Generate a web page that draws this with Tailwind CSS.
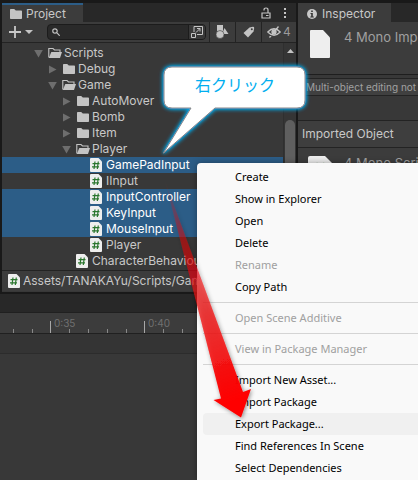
<!DOCTYPE html>
<html lang="ja">
<head>
<meta charset="utf-8">
<meta name="viewport" content="width=device-width, initial-scale=1">
<title>Project</title>
<script src="https://cdn.jsdelivr.net/npm/@tailwindcss/browser@4"></script>
</head>
<body class="bg-[#191919]">
<svg class="hidden" aria-hidden="true">
  <symbol id="folder" viewBox="0 0 14 12"><path d="M1 1.8q0-.8.8-.8h3.4l1.6 1.5h5.4q.8 0 .8.8v6.900q0 .8-.8.8H1.800q-.8 0-.8-.8z" fill="#c4c4c4"/></symbol>
  <symbol id="folder-open" viewBox="0 0 14 12"><path d="M.8 10.500V1.500h4.200L6.500 3H12v2" fill="none" stroke="#c4c4c4" stroke-width="1.100"/><path d="M3.300 5H14l-2 6H.800z" fill="#c4c4c4"/></symbol>
  <symbol id="script" viewBox="0 0 12 14"><path d="M1 0h7.500L12 3.500V13q0 1-1 1H1q-1 0-1-1V1q0-1 1-1z" fill="#eee"/><path d="M5 3.500 4 11M8.300 3.500l-1 7.500M2.500 5.700h7M2 8.800h7" fill="none" stroke="#2a762e" stroke-width="1.200"/></symbol>
  <symbol id="right" viewBox="0 0 9 9"><path d="M1 .5v8l7.500-4z" fill="#6e6e6e"/></symbol>
  <symbol id="down" viewBox="0 0 9 9"><path d="M.2 1h8.600L4.500 8.500z" fill="#6e6e6e"/></symbol>
</svg>

<div class="relative h-screen overflow-hidden bg-[#191919] pt-[3px] font-['Inter',sans-serif] text-[12px] text-[#c8c8c8]">
  <div class="flex gap-[2px] pl-[2px]">

    <!-- Project window -->
    <section class="w-[294px] shrink-0 bg-[#383838]">
      <header class="flex h-[19px] items-stretch bg-[#282828]">
        <h2 class="flex w-[81px] items-center gap-[3px] border-t-2 border-[#2c5d87] bg-[#3c3c3c] pl-[7px] leading-4">
          <svg class="h-3 w-[14px]"><use href="#folder"/></svg>Project
        </h2>
        <div class="ml-auto flex items-center gap-3 pr-[9px]">
          <button type="button" aria-label="Lock"><svg class="h-3 w-[10px]" viewBox="0 0 10 12" fill="none" stroke="#c4c4c4" stroke-width="1.200"><path d="M1 6h8v5H1zM3 3.500V3q0-2 2-2t2 2v3M5 8.500h2.500"/></svg></button>
          <button type="button" aria-label="Window menu"><svg class="h-3 w-1" viewBox="0 0 4 12" fill="#c4c4c4"><path d="M1 1h2v2H1zM1 5h2v2H1zM1 9h2v2H1z"/></svg></button>
        </div>
      </header>

      <div class="flex h-[21px] items-center border-b border-[#232323] bg-[#3c3c3c]">
        <button type="button" aria-label="Create asset" class="flex w-[45px] shrink-0 items-center gap-1 pl-[7px]">
          <svg class="size-3" viewBox="0 0 12 12" stroke="#c8c8c8" stroke-width="1.800"><path d="M6 0v12M0 6h12"/></svg>
          <svg class="h-1 w-2" viewBox="0 0 8 4"><path d="M0 0h8L4 4z" fill="#c4c4c4"/></svg>
        </button>
        <div class="flex h-4 min-w-0 flex-1 items-center overflow-hidden rounded-[4px] border border-[#1c1c1c] bg-[#2a2a2a] pl-1">
          <svg class="h-2 w-2 shrink-0" viewBox="0 0 8 8" fill="none" stroke="#c4c4c4" stroke-width="1.200"><circle cx="3" cy="3" r="2.200"/><path d="m4.700 4.700 3 3"/></svg>
          <input type="text" aria-label="Search assets" class="h-3 min-w-0 flex-1 bg-transparent outline-none">
          <button type="button" aria-label="Open search" class="flex h-full shrink-0 items-center border-l border-[#1c1c1c] bg-[#383838] px-[2px]"><svg class="size-3" viewBox="0 0 12 12" fill="none" stroke="#c4c4c4" stroke-width="1"><path d="M3 6V.5h8.500v8H6M.5 7.500h4v4h-4zM5 6.500l4-4M6 2.500h3v3"/></svg></button>
        </div>
        <button type="button" aria-label="Filter by type" class="ml-[3px] flex h-full w-[26px] shrink-0 items-center justify-center border-l border-[#232323]"><svg class="h-[14px] w-[13px]" viewBox="0 0 13 14" fill="#c4c4c4"><path d="M1 0h6v6H1zM8.500 3l4 6H6z"/><circle cx="4" cy="9.500" r="4" stroke="#3c3c3c" stroke-width=".6"/></svg></button>
        <button type="button" aria-label="Filter by label" class="flex h-full w-[26px] shrink-0 items-center justify-center border-l border-[#232323]"><svg class="size-3" viewBox="0 0 12 12"><path d="M6.500 1.500 10 .800q1.200 0 1.200 1.200L10.500 5.500 5 11.500.500 7z" fill="#c4c4c4"/><circle cx="8.800" cy="3.200" r="1" fill="#3c3c3c"/></svg></button>
        <button type="button" aria-label="Hidden packages: 4" class="flex h-full w-[35px] shrink-0 items-center gap-[2px] border-l border-[#232323] pl-[5px]"><svg class="h-3 w-[14px]" viewBox="0 0 14 12" fill="none" stroke="#c4c4c4" stroke-width="1.300"><path d="M.8 6Q7-.5 13.200 6 7 12.500.800 6zM11.500.500l-9 11"/><circle cx="7" cy="6" r="2" fill="#c4c4c4"/></svg><span class="text-[#9a9a9a]">4</span></button>
      </div>

      <div class="flex">
        <ul role="tree" aria-label="Assets" class="min-w-0 flex-1 overflow-hidden pt-[2px] pb-px leading-4 whitespace-nowrap">
          <li role="treeitem" class="flex h-4 items-center pl-[32px]"><svg class="mr-[5px] size-[9px]"><use href="#down"/></svg><svg class="mr-[2px] h-3 w-[14px]"><use href="#folder-open"/></svg>Scripts</li>
          <li role="treeitem" class="flex h-4 items-center pl-[46px]"><svg class="mr-[5px] size-[9px]"><use href="#right"/></svg><svg class="mr-[2px] h-3 w-[14px]"><use href="#folder"/></svg>Debug</li>
          <li role="treeitem" class="flex h-4 items-center pl-[46px]"><svg class="mr-[5px] size-[9px]"><use href="#down"/></svg><svg class="mr-[2px] h-3 w-[14px]"><use href="#folder-open"/></svg>Game</li>
          <li role="treeitem" class="flex h-4 items-center pl-[60px]"><svg class="mr-[5px] size-[9px]"><use href="#right"/></svg><svg class="mr-[2px] h-3 w-[14px]"><use href="#folder"/></svg>AutoMover</li>
          <li role="treeitem" class="flex h-4 items-center pl-[60px]"><svg class="mr-[5px] size-[9px]"><use href="#right"/></svg><svg class="mr-[2px] h-3 w-[14px]"><use href="#folder"/></svg>Bomb</li>
          <li role="treeitem" class="flex h-4 items-center pl-[60px]"><svg class="mr-[5px] size-[9px]"><use href="#right"/></svg><svg class="mr-[2px] h-3 w-[14px]"><use href="#folder"/></svg>Item</li>
          <li role="treeitem" class="flex h-4 items-center pl-[60px]"><svg class="mr-[5px] size-[9px]"><use href="#down"/></svg><svg class="mr-[2px] h-3 w-[14px]"><use href="#folder-open"/></svg>Player</li>
          <li role="treeitem" aria-selected="true" class="flex h-4 items-center gap-1 bg-[#2c5d87] pl-[88px] text-white"><svg class="h-[14px] w-3"><use href="#script"/></svg>GamePadInput</li>
          <li role="treeitem" class="flex h-4 items-center gap-1 pl-[88px]"><svg class="h-[14px] w-3"><use href="#script"/></svg>IInput</li>
          <li role="treeitem" aria-selected="true" class="flex h-4 items-center gap-1 bg-[#2c5d87] pl-[88px] text-white"><svg class="h-[14px] w-3"><use href="#script"/></svg>InputController</li>
          <li role="treeitem" aria-selected="true" class="flex h-4 items-center gap-1 bg-[#2c5d87] pl-[88px] text-white"><svg class="h-[14px] w-3"><use href="#script"/></svg>KeyInput</li>
          <li role="treeitem" aria-selected="true" class="flex h-4 items-center gap-1 bg-[#2c5d87] pl-[88px] text-white"><svg class="h-[14px] w-3"><use href="#script"/></svg>MouseInput</li>
          <li role="treeitem" class="flex h-4 items-center gap-1 pl-[88px]"><svg class="h-[14px] w-3"><use href="#script"/></svg>Player</li>
          <li role="treeitem" class="flex h-4 items-center gap-1 pl-[74px]"><svg class="h-[14px] w-3"><use href="#script"/></svg>CharacterBehaviour</li>
        </ul>
        <div class="flex w-[13px] flex-col items-center border-l border-[#2f2f2f] bg-[#353535] pt-[6px]">
          <svg class="mb-[67px] h-1 w-[7px]" viewBox="0 0 7 4"><path d="M0 4h7L3.500 0z" fill="#c4c4c4"/></svg>
          <div class="w-[10px] flex-1 rounded-full bg-[#5f5f5f]"></div>
        </div>
      </div>

      <footer class="flex h-[21px] items-center gap-[3px] overflow-hidden border-t border-[#232323] bg-[#3c3c3c] pl-[6px] whitespace-nowrap">
        <svg class="h-[14px] w-3 shrink-0"><use href="#script"/></svg>Assets/TANAKAYu/Scripts/Game
      </footer>
    </section>

    <!-- Inspector window -->
    <section class="min-w-0 flex-1 overflow-hidden bg-[#383838] whitespace-nowrap">
      <header class="flex h-[19px] bg-[#282828]">
        <h2 class="flex w-[93px] items-center gap-[5px] bg-[#3c3c3c] pt-[2px] pl-[9px] leading-4">
          <svg class="size-[10px]" viewBox="0 0 10 10"><circle cx="5" cy="5" r="5" fill="#c8c8c8"/><path d="M4.200 1.500h1.600v1.600H4.200zM3.500 4h2.300v3.500h1v1H3.300v-1h.900V5h-.7z" fill="#333"/></svg>Inspector
        </h2>
      </header>
      <div class="flex h-[53px] gap-[14px] border-b border-[#1e1e1e] bg-[#3c3c3c] pt-2 pl-3 text-[13px] leading-[14px] text-[#a0a0a0]">
        <svg class="h-7 w-5 shrink-0" viewBox="0 0 20 28"><path d="M1 0h12l7 7.500V27q0 1-1 1H1q-1 0-1-1V1q0-1 1-1z" fill="#eee"/></svg>4 Mono Importers
      </div>
      <div class="mt-[3px] h-[18px] border-y border-[#232323] bg-[#404040] pl-2 text-[10px] leading-4 text-[#a0a0a0]">Multi-object editing not supported.</div>
      <div class="mt-6 h-7 border-y border-[#232323] bg-[#3e3e3e] pl-1 leading-[26px]">Imported Object</div>
      <div class="flex h-[144px] gap-3 bg-[#3c3c3c] pt-2 pl-[10px] text-[13px] leading-[14px] text-[#a0a0a0]"><svg class="h-7 w-6 shrink-0"><use href="#script"/></svg>4 Mono Scripts</div>
    </section>
  </div>

  <!-- Timeline -->
  <section class="mt-[2px] h-full bg-[#383838]">
    <div class="h-[18px] bg-[#282828]"></div>
    <div class="relative h-[22px] border-y border-[#202020] bg-[#3c3c3c]">
      <svg class="absolute inset-0 h-5 w-full" stroke="#a8a8a8"><path d="M50.500 8v12M144.500 8v12"/><path d="M13.500 16v4M32.500 16v4M69.500 16v4M88.500 16v4M107.500 16v4M126.500 16v4M163.500 16v4M182.500 16v4" stroke="#888"/></svg>
      <div class="flex pt-[2px] pl-[54px] text-[10px] leading-4 text-[#707070]"><span class="w-[94px]">0:35</span><span>0:40</span></div>
    </div>
    <div class="h-5 border-b border-[#2c2c2c] bg-[#343434]"></div>
  </section>

  <!-- Context menu -->
  <div role="menu" class="absolute top-[163px] right-0 bottom-0 left-[197px] flex flex-col overflow-hidden rounded-tl-[4px] bg-[#f9f9f9] pt-[3px] pl-[6px] font-['Noto_Sans',sans-serif] text-[11px] leading-[22px] whitespace-nowrap text-black shadow-[0_0_6px_rgba(0,0,0,0.35)] *:shrink-0">
    <button type="button" role="menuitem" class="h-[22px] pl-8 text-left">Create</button>
    <button type="button" role="menuitem" class="h-[22px] pl-8 text-left">Show in Explorer</button>
    <button type="button" role="menuitem" class="h-[22px] pl-8 text-left">Open</button>
    <button type="button" role="menuitem" class="h-[22px] pl-8 text-left">Delete</button>
    <button type="button" role="menuitem" disabled class="h-[22px] pl-8 text-left text-[#a0a0a0]">Rename</button>
    <button type="button" role="menuitem" class="h-[22px] pl-8 text-left">Copy Path</button>
    <hr class="my-1 border-[#d4d4d4]">
    <button type="button" role="menuitem" disabled class="h-[22px] pl-8 text-left text-[#a0a0a0]">Open Scene Additive</button>
    <hr class="my-1 border-[#d4d4d4]">
    <button type="button" role="menuitem" disabled class="h-[22px] pl-8 text-left text-[#a0a0a0]">View in Package Manager</button>
    <hr class="my-1 border-[#d4d4d4]">
    <button type="button" role="menuitem" class="h-[22px] pl-8 text-left">Import New Asset...</button>
    <button type="button" role="menuitem" class="h-[22px] pl-8 text-left">Import Package</button>
    <button type="button" role="menuitem" class="h-[22px] rounded-l-[4px] bg-[#f0f0f0] pl-8 text-left">Export Package...</button>
    <button type="button" role="menuitem" class="h-[22px] pl-8 text-left">Find References In Scene</button>
    <button type="button" role="menuitem" class="h-[22px] pl-8 text-left">Select Dependencies</button>
  </div>

  <!-- Annotations: speech bubble and arrow -->
  <svg class="pointer-events-none absolute top-0 left-0 h-[480px] w-[418px]" viewBox="0 0 418 480">
    <defs>
      <linearGradient id="fade" gradientUnits="userSpaceOnUse" x1="165" y1="181" x2="236" y2="400"><stop offset="0" stop-color="#f00" stop-opacity="0"/><stop offset=".25" stop-color="#f00208" stop-opacity=".45"/><stop offset=".6" stop-color="#ee1111" stop-opacity=".75"/><stop offset="1" stop-color="#f00"/></linearGradient>
      <filter id="glow" x="-20%" y="-20%" width="140%" height="140%"><feDropShadow dx="0" dy="0" stdDeviation="2" flood-color="#00aeef"/><feDropShadow dx="0" dy="0" stdDeviation="1" flood-color="#00a0e0"/></filter>
      <filter id="shade" x="-30%" y="-10%" width="160%" height="120%"><feDropShadow dx="1" dy="1" stdDeviation="2" flood-color="#000" flood-opacity=".45"/></filter>
    </defs>
    <path d="M172 67H297q8 0 8 8v25q0 8-8 8H215L163.500 153 191 108H172q-8 0-8-8V75q0-8 8-8z" fill="#fff" stroke="#888" stroke-width="1" filter="url(#glow)"/>
    <path d="M165 181 243 392 251 389 241 417.500 213.500 400 221 398.500z" fill="url(#fade)" filter="url(#shade)"/>
  </svg>
  <p class="absolute top-[67px] left-[164px] w-[142px] text-center font-['Noto_Sans_CJK_JP',sans-serif] text-[16px] leading-[34px] text-[#00aeef]">右クリック</p>
</div>
</body>
</html>
